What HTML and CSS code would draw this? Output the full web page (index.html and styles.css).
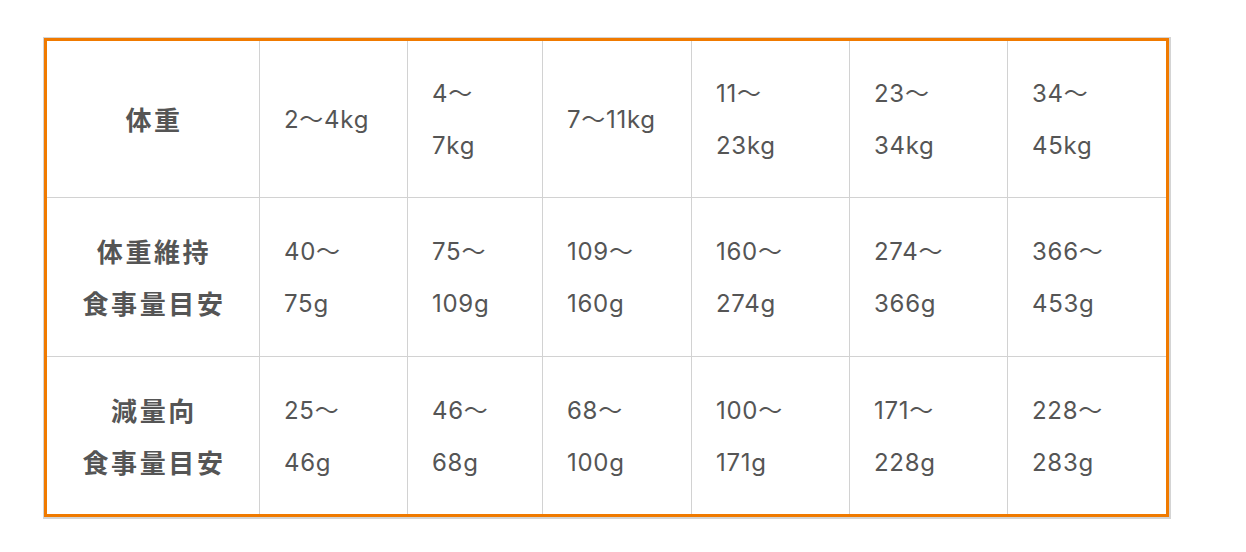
FILE: index.html
```html
<!DOCTYPE html>
<html lang="ja">
<head>
<meta charset="utf-8">
<link rel="stylesheet" href="styles.css">
</head>
<body>
<div class="frame">
  <div class="table">
    <div class="cell head">体重</div>
    <div class="cell">2～4kg</div>
    <div class="cell">4～<br>7kg</div>
    <div class="cell">7～11kg</div>
    <div class="cell">11～<br>23kg</div>
    <div class="cell">23～<br>34kg</div>
    <div class="cell">34～<br>45kg</div>

    <div class="cell head">体重維持<br>食事量目安</div>
    <div class="cell">40～<br>75g</div>
    <div class="cell">75～<br>109g</div>
    <div class="cell">109～<br>160g</div>
    <div class="cell">160～<br>274g</div>
    <div class="cell">274～<br>366g</div>
    <div class="cell">366～<br>453g</div>

    <div class="cell head">減量向<br>食事量目安</div>
    <div class="cell">25～<br>46g</div>
    <div class="cell">46～<br>68g</div>
    <div class="cell">68～<br>100g</div>
    <div class="cell">100～<br>171g</div>
    <div class="cell">171～<br>228g</div>
    <div class="cell">228～<br>283g</div>
  </div>
</div>
</body>
</html>
```

FILE: styles.css
```css
html, body {
  margin: 0;
  padding: 0;
  background: #ffffff;
}

body {
  padding: 37px 0 0 43px;
  font-family: "Noto Sans CJK JP", "Noto Sans", sans-serif;
  color: #555555;
}

.frame {
  display: inline-block;
  border-style: solid;
  border-color: #d4d4d4;
  border-width: 1px 2px 2px 1px;
}

.table {
  display: grid;
  grid-template-columns: 213px 148px 135px 149px 158px 158px 158px;
  grid-template-rows: 157px 159px 157px;
  border: 3px solid #f07a00;
}

.cell {
  display: flex;
  align-items: center;
  padding: 2px 0 0 24px;
  font-family: Inter, "Noto Sans CJK JP", sans-serif;
  font-size: 24px;
  line-height: 52px;
  letter-spacing: 0.03em;
  border-right: 1px solid #d2d2d2;
  border-bottom: 1px solid #d2d2d2;
}

.cell:nth-child(7n) {
  border-right: none;
}

.cell:nth-child(n+15) {
  border-bottom: none;
}

.head {
  justify-content: center;
  text-align: center;
  padding: 0 0 0 2px;
  font-family: "Noto Sans CJK JP", sans-serif;
  font-weight: bold;
  font-size: 26px;
  letter-spacing: 0.1em;
}
```
